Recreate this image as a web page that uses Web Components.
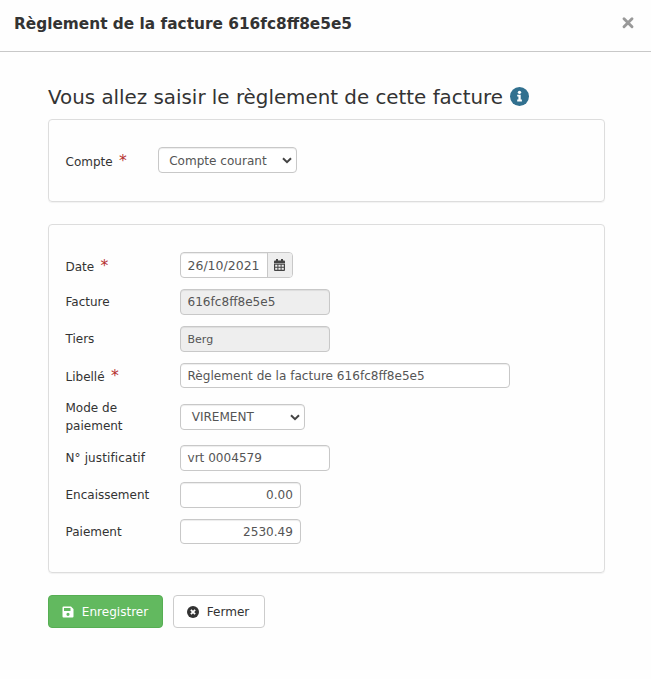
<!DOCTYPE html>
<html lang="fr">
<head>
<meta charset="utf-8">
<title>Règlement de la facture</title>
<style>
html, body { margin: 0; background: #fefefe; }
body { width: 651px; height: 679px; overflow: hidden; font: 12px/18px "DejaVu Sans", sans-serif; color: #333; }
</style>
</head>
<body>
<pay-dialog>
  <span slot="title">Règlement de la facture 616fc8ff8e5e5</span>
  <pay-heading>Vous allez saisir le règlement de cette facture</pay-heading>
  <pay-panel style="--panel-h:83px">
    <pay-row required style="--label:92px"><span slot="label">Compte</span><pay-select style="--w:139px;--ty:1px">Compte courant</pay-select></pay-row>
  </pay-panel>
  <pay-panel style="--panel-h:349px">
    <pay-row required><span slot="label">Date</span><pay-input addon style="--w:113px;--fs:12.5px;--ty:1px">26/10/2021</pay-input></pay-row>
    <pay-row><span slot="label">Facture</span><pay-input readonly>616fc8ff8e5e5</pay-input></pay-row>
    <pay-row><span slot="label">Tiers</span><pay-input readonly style="--fs:11px;--ty:1px">Berg</pay-input></pay-row>
    <pay-row required style="--lt:2px"><span slot="label">Libellé</span><pay-input style="--w:330px;--h:25px">Règlement de la facture 616fc8ff8e5e5</pay-input></pay-row>
    <pay-row style="--gap:16px"><span slot="label">Mode de paiement</span><pay-select style="--w:125px">VIREMENT</pay-select></pay-row>
    <pay-row style="--gap:15px"><span slot="label" style="letter-spacing:.12px">N° justificatif</span><pay-input>vrt 0004579</pay-input></pay-row>
    <pay-row><span slot="label">Encaissement</span><pay-input style="--w:121px;--align:right">0.00</pay-input></pay-row>
    <pay-row><span slot="label">Paiement</span><pay-input style="--w:121px;--h:25px;--align:right">2530.49</pay-input></pay-row>
  </pay-panel>
  <pay-button primary style="--w:115px" slot="actions">Enregistrer</pay-button>
  <pay-button style="--w:92px" slot="actions">Fermer</pay-button>
</pay-dialog>
<script>
const component = (name, html) => customElements.define(name, class extends HTMLElement {
  constructor() {
    super();
    this.attachShadow({ mode: 'open' }).innerHTML = html;
  }
});

component('pay-dialog', `<style>
:host { display: block; }
header { box-sizing: border-box; height: 52px; padding: 0 14px; display: flex; justify-content: space-between; align-items: flex-start; border-bottom: 1px solid #c8c8c8; }
h1 { margin: 0; padding-top: 14px; font-size: 15.35px; line-height: 20px; font-weight: bold; white-space: nowrap; }
header svg { display: block; margin: 14px 0 0; width: 18px; height: 18px; }
main { padding: 32px 46px 0 48px; }
.actions { display: flex; gap: 10px; }
</style>
<header><h1><slot name="title"></slot></h1>
<svg viewBox="0 0 18 18"><path d="M5 4.800 13 12.800M13 4.800 5 12.800" stroke="#999" stroke-width="2.900" stroke-linecap="round"/></svg></header>
<main><slot></slot><div class="actions"><slot name="actions"></slot></div></main>`);

component('pay-heading', `<style>
:host { display: flex; align-items: center; gap: 7px; height: 35px; font-size: 19.85px; line-height: 26px; white-space: nowrap; }
h2 { margin: -7px 0 0; font: inherit; }
svg { width: 19px; height: 19px; margin-top: -10px; }
</style>
<h2><slot></slot></h2>
<svg viewBox="0 0 19 19"><circle cx="9.500" cy="9.500" r="9.500" fill="#31708f"/><circle cx="9.500" cy="5.300" r="1.650" fill="#fff"/><path d="M7.200 7.800h3.500v4.800h1.200v1.800H7.200v-1.800h1.200V9.600H7.200z" fill="#fff"/></svg>`);

component('pay-panel', `<style>
:host { display: block; box-sizing: border-box; height: var(--panel-h); padding: 27px 17px 0 16.5px; margin-bottom: 22px; border: 1px solid #ddd; border-radius: 4px; box-shadow: 0 1px 1px rgba(0,0,0,.05); }
</style><slot></slot>`);

component('pay-row', `<style>
:host { display: grid; grid-template-columns: var(--label, 114.5px) 1fr; align-items: center; margin-top: var(--gap, 11px); }
:host(:first-child) { margin-top: 0; }
.label { width: 90px; margin: -6px 0 -6px; }
i { display: none; margin-left: 2.5px; font-style: normal; font-size: 15.6px; line-height: 12px; color: #b52f2f; }
:host([required]) i { display: inline; }
:host([required]) .label { padding-top: var(--lt, 3px); }
</style><div class="label"><slot name="label"></slot> <i>*</i></div><slot></slot>`);

component('pay-input', `<style>
:host { display: flex; box-sizing: border-box; width: var(--w, 150px); height: var(--h, 26px); border: 1px solid #c8c8c8; border-radius: 4px; color: #555; background: #fff; box-shadow: inset 0 1px 1px rgba(0,0,0,.075); font-size: var(--fs, 12.08px); overflow: hidden; }
:host([readonly]) { background: #eee; }
.text { flex: 1; padding: var(--ty, 0px) 7px 0 6.5px; line-height: 24px; text-align: var(--align, left); white-space: nowrap; }
.addon { display: none; width: 24px; background: #eee; border-left: 1px solid #c8c8c8; align-items: center; justify-content: center; }
.addon svg { margin: -1px 1px 0 0; }
:host([addon]) .addon { display: flex; }
</style><div class="text"><slot></slot></div>
<div class="addon"><svg width="11" height="12" viewBox="0 0 11 12"><path fill="#444" fill-rule="evenodd" d="M2 0h2v1.500h3V0h2v1.500h1q1 0 1 1V4H0V2.500q0-1 1-1h1zM0 4.500h11V11q0 1-1 1H1q-1 0-1-1zM1.200 5.700v2h2.200v-2zm3.200 0v2h2.200v-2zm3.200 0v2h2.200v-2zm-6.400 3v2h2.200v-2zm3.200 0v2h2.200v-2zm3.200 0v2h2.200v-2z"/></svg></div>`);

component('pay-select', `<style>
:host { display: flex; box-sizing: border-box; align-items: center; justify-content: space-between; width: var(--w); height: 26px; padding: var(--ty, 0px) 4px 0 10.7px; border: 1px solid #c8c8c8; border-radius: 4px; color: #555; background: #fff; box-shadow: inset 0 1px 1px rgba(0,0,0,.075); font-size: 12.06px; white-space: nowrap; }
</style><span><slot></slot></span>
<svg width="10" height="7" viewBox="0 0 10 7"><path d="M1 1.200 5 5.200 9 1.200" fill="none" stroke="#444" stroke-width="2"/></svg>`);

component('pay-button', `<style>
:host { display: flex; box-sizing: border-box; align-items: center; gap: 8px; width: var(--w); height: 33px; padding: 0 13px 0 12.8px; border: 1px solid #ccc; border-radius: 4px; background: #fff; color: #333; font-size: 12.06px; white-space: nowrap; }
:host([primary]) { background: #62b95f; border-color: #56ae53; color: #fff; }
svg { display: block; width: 12px; height: 12px; }
.save { display: none; }
:host([primary]) .save { display: block; }
:host([primary]) .close { display: none; }
</style>
<svg class="save" viewBox="0 0 12 12"><path fill="#fff" fill-rule="evenodd" d="M1.500.5H9L11.500 3v7.500q0 1-1 1h-9q-1 0-1-1v-9q0-1 1-1zM2 2v3h6.500V2zM6 6.700a1.600 1.600 0 1 0 0 3.200 1.600 1.600 0 0 0 0-3.200z"/></svg>
<svg class="close" viewBox="0 0 12 12"><circle cx="6" cy="6" r="6" fill="#333"/><path d="M3.900 3.900 8.100 8.100M8.100 3.900 3.900 8.100" stroke="#fff" stroke-width="1.800"/></svg>
<span><slot></slot></span>`);
</script>
</body>
</html>
